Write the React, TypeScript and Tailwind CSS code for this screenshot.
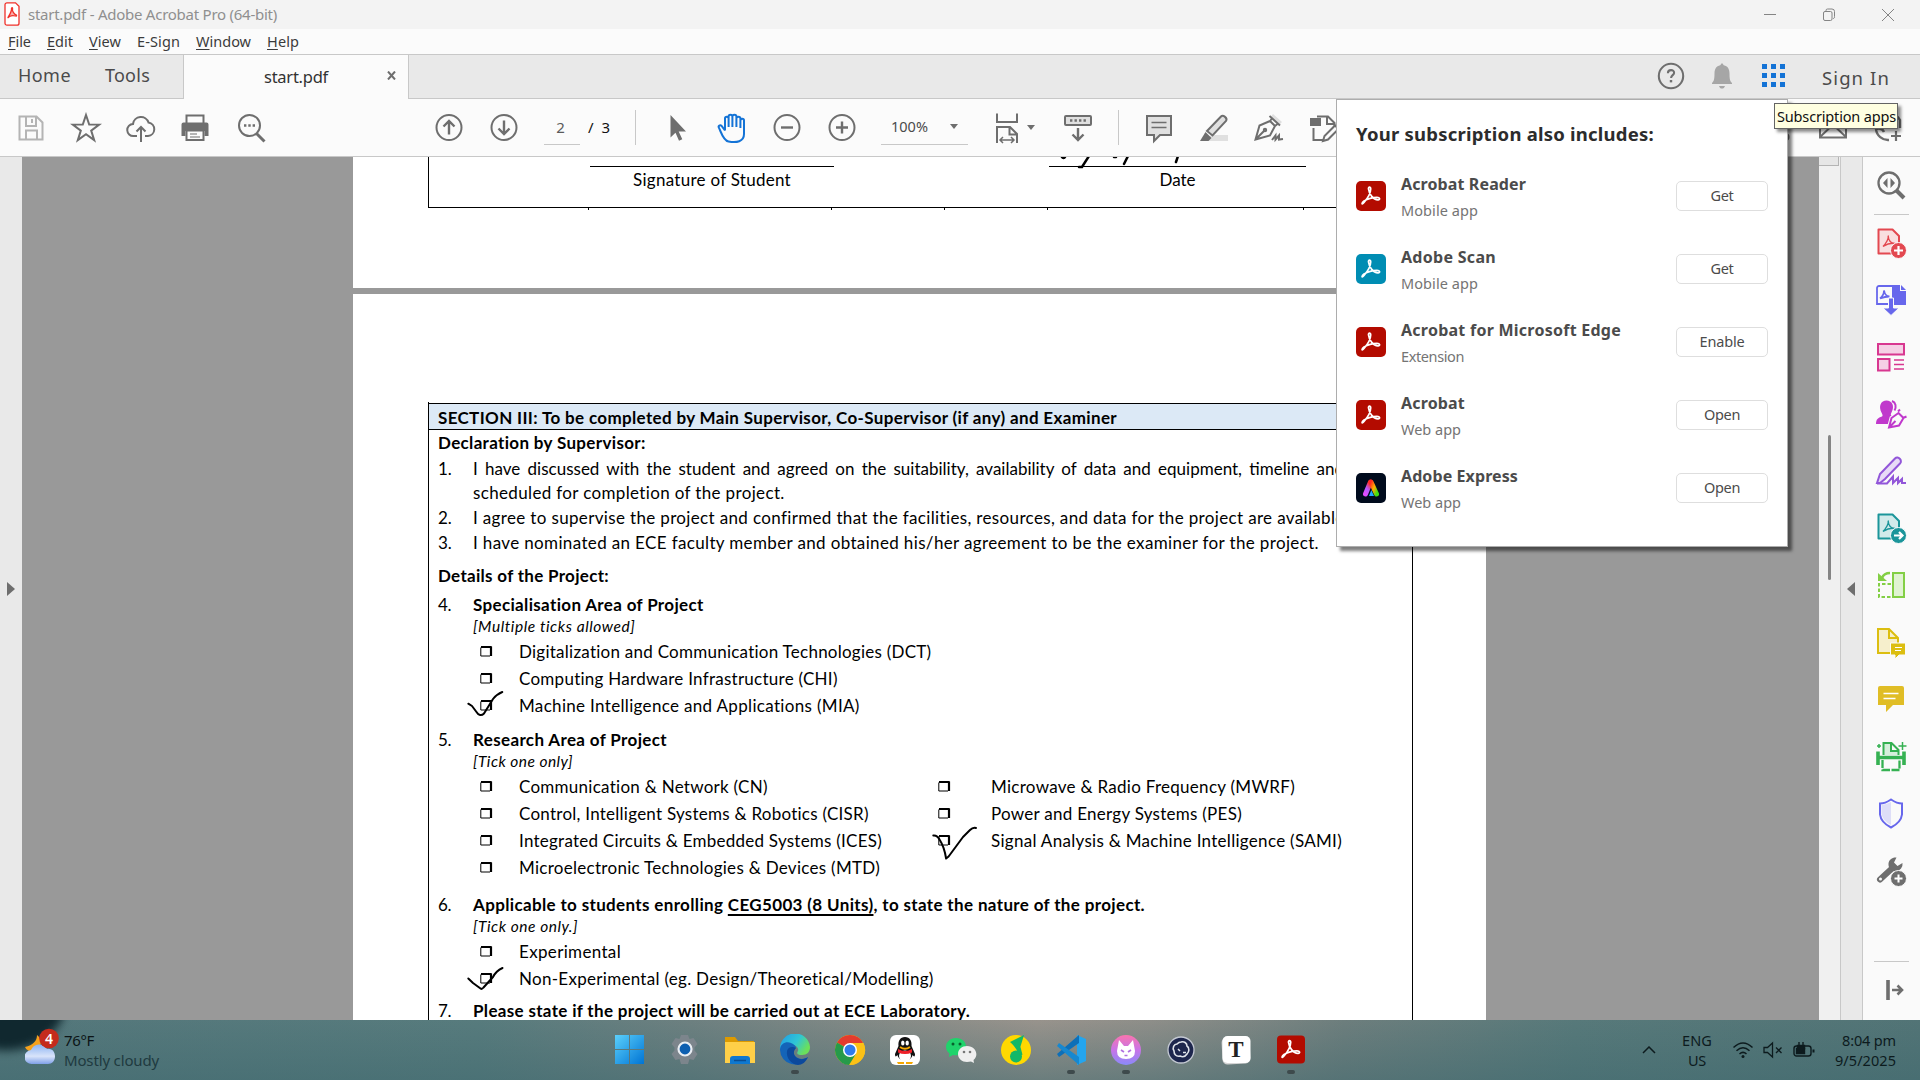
import React, { useLayoutEffect, useRef } from "react";
import clsx from "clsx";

type FitProps = { children: React.ReactNode; w: number; className?: string; by?: "letter" | "word" };

/* Single line of text whose spacing is tuned so that it occupies exactly `w` pixels. */
function Fit({ children, w, className, by = "letter" }: FitProps) {
  const ref = useRef<HTMLSpanElement>(null);
  useLayoutEffect(() => {
    const el = ref.current;
    if (!el) return;
    el.style.letterSpacing = "0px";
    el.style.wordSpacing = "0px";
    const text = el.textContent || "";
    const natural = el.getBoundingClientRect().width;
    if (by === "word") {
      el.style.wordSpacing = (w - natural) / Math.max(1, text.split(" ").length - 1) + "px";
    } else {
      el.style.letterSpacing = (w - natural) / Math.max(1, text.length) + "px";
    }
  }, [w, by, children]);
  return (
    <span ref={ref} className={clsx("inline-block w-max shrink-0 whitespace-pre", className)}>
      {children}
    </span>
  );
}

type IconProps = { children: React.ReactNode; className?: string; size?: number; color?: string; sw?: number };
function Icon({ children, className, size = 32, color = "#6e6e6e", sw = 2 }: IconProps) {
  return (
    <svg
      width={size}
      height={size}
      viewBox="0 0 32 32"
      fill="none"
      stroke={color}
      strokeWidth={sw}
      className={clsx("shrink-0", className)}
    >
      {children}
    </svg>
  );
}

/* ---------- window chrome ---------- */

function TitleBar() {
  return (
    <div className="flex h-[29px] items-center bg-[#f3f3f3] pl-1">
      <svg width="16" height="24" viewBox="0 0 16 24" fill="none" stroke="#f0322b" strokeWidth="1.3" className="-mt-px">
        <path d="M3 .8h8.500l3.500 3.400v17a2 2 0 0 1-2 2H3a2 2 0 0 1-2-2V2.800a2 2 0 0 1 2-2z" fill="#fff" />
        <path d="M4 15.500c1-2 4-6 3.500-9 0-1.200 1.300-1.200 1 .3-.5 2.700 2 5.700 3.500 6 1 .3.500 1.500-.5 1.200-2-.6-4-.6-6 .5-1 .8-1.500 1.500-1.500 1z" fill="#f0322b" fillOpacity=".4" />
      </svg>
      <Fit w={249} className="ml-[8px] text-[15px] text-[#8f8f8f]">start.pdf - Adobe Acrobat Pro (64-bit)</Fit>
      <div className="ml-auto mr-[25px] flex items-center gap-[45px]">
        <svg width="14" height="14" viewBox="0 0 14 14" stroke="#848484"><path d="M1 6.500h12" /></svg>
        <svg width="14" height="14" viewBox="0 0 14 14" fill="none" stroke="#848484">
          <rect x="1.500" y="3.500" width="8.500" height="9" rx="1.500" />
          <path d="M4 3V2.500a1.500 1.500 0 0 1 1.500-1.500H10a2.500 2.500 0 0 1 2.500 2.500v5A1.500 1.500 0 0 1 11 10.500" />
        </svg>
        <svg width="14" height="14" viewBox="0 0 14 14" stroke="#848484"><path d="M1 1l12 12M13 1L1 13" /></svg>
      </div>
    </div>
  );
}

const menus = [
  { k: "F", rest: "ile", w: 23 },
  { k: "E", rest: "dit", w: 26 },
  { k: "V", rest: "iew", w: 32 },
  { k: "", rest: "E-Sign", w: 43 },
  { k: "W", rest: "indow", w: 55 },
  { k: "H", rest: "elp", w: 32 },
];

function MenuBar() {
  return (
    <div className="flex h-[26px] items-center gap-4 border-b border-[#c8c8c8] bg-[#fbfbfb] pl-2 text-[14.5px] text-[#3b3b3b]">
      {menus.map((m) => (
        <Fit key={m.rest} w={m.w}>
          {m.k && <span className="underline decoration-1 underline-offset-2">{m.k}</span>}
          {m.rest}
        </Fit>
      ))}
    </div>
  );
}

function TabBar() {
  return (
    <div className="flex h-[44px] items-stretch bg-[#e9e9e9]">
      <div className="flex w-[183px] items-center border-b border-[#c8c8c8] pb-[2px] pl-[18px] text-[18px] text-[#4b4b4b]">
        <Fit w={53}>Home</Fit>
        <Fit w={45} className="ml-[34px]">Tools</Fit>
      </div>
      <div className="flex w-[226px] items-center border-x border-[#c8c8c8] bg-[#fbfbfb] pl-[80px] text-[#323232]">
        <Fit w={64} className="text-[16.5px]">start.pdf</Fit>
        <svg width="9" height="9" viewBox="0 0 9 9" stroke="#6e6e6e" strokeWidth="2" className="-mt-1 ml-[59px]"><path d="M1 .5l7 8M8 .5l-7 8" /></svg>
      </div>
      <div className="flex flex-1 items-center border-b border-[#c8c8c8] pb-[2px] pr-[30px]">
        <Icon className="ml-auto" size={30} sw={2.200}>
          <circle cx="16" cy="16" r="13" />
          <path d="M12.700 13c0-4.500 6.800-4.200 6.600-.3-.1 2.300-3.200 2.500-3.200 5.300" />
          <path d="M16 20.300v2.500" strokeWidth="2.600" />
        </Icon>
        <svg width="22" height="26" viewBox="0 0 22 26" fill="#a6a6a6" className="ml-[25px]">
          <path d="M11 0l1.800 2.300c4 .8 5.700 4 5.700 8 0 6 .6 8 2.500 9.700v1H1v-1c1.900-1.700 2.500-3.700 2.500-9.700 0-4 1.700-7.200 5.700-8zM8 23h6c-.5 1.700-1.600 2.600-3 2.600S8.500 24.700 8 23z" />
        </svg>
        <div className="ml-[29px] grid grid-cols-3 gap-x-[4px] gap-y-[4px]">
          {Array.from({ length: 9 }, (_, i) => (
            <div key={i} className="h-[5px] w-[5px] bg-[#1473d6]" />
          ))}
        </div>
        <Fit w={68} className="ml-[37px] mt-1 text-[18.500px] text-[#4b4b4b]">Sign In</Fit>
      </div>
    </div>
  );
}

function Caret({ className }: { className?: string }) {
  return <svg width="8" height="6" viewBox="0 0 8 6" fill="#6e6e6e" className={clsx("shrink-0", className)}><path d="M0 0h8L4 5z" /></svg>;
}

function Toolbar() {
  return (
    <div className="flex h-[58px] items-center border-b border-[#c8c8c8] bg-[#fbfbfb] pl-[15px]">
      <Icon color="#b4b4b4">
        <path d="M4.500 4.500h17l6 6v17h-23z" />
        <path d="M11 5v9h10V5M17 7v4M11 27v-8.500h11V27" />
      </Icon>
      <Icon className="ml-[23px]">
        <path d="M16 3l3.200 9.500 10 .1-8 6 3 9.500-8.200-5.800-8.200 5.800 3-9.500-8-6 10-.1z" />
      </Icon>
      <Icon className="ml-[23px]">
        <path d="M12 24H8.500a6 6 0 0 1-.5-12 8 8 0 0 1 15.500-1.500A6.800 6.800 0 0 1 23 24h-3" />
        <path d="M16 30V15M11.500 19.500L16 15l4.500 4.500" />
      </Icon>
      <Icon className="ml-[22px]">
        <path d="M7.500 11V3.500h17V11" />
        <path d="M2.500 12.500a2 2 0 0 1 2-2h23a2 2 0 0 1 2 2V24h-4v-5h-19v5h-4z" fill="#6e6e6e" stroke="none" />
        <rect x="7.500" y="18.500" width="17" height="9.500" fill="#fbfbfb" />
        <path d="M11 22h7M11 25h10" strokeWidth="1.200" />
      </Icon>
      <Icon className="ml-[24px]">
        <circle cx="14.500" cy="13.500" r="10.500" />
        <path d="M21.500 21.500l8 8" strokeWidth="3" />
        <path d="M9 13.500h2.400M13.300 13.500h2.400M17.600 13.500H20" strokeWidth="2.400" />
      </Icon>
      <Icon className="ml-[166px]">
        <circle cx="16" cy="15.500" r="12.500" />
        <path d="M16 22.500V9M10.500 14.500L16 9l5.500 5.500" strokeWidth="2.400" />
      </Icon>
      <Icon className="ml-[23px]">
        <circle cx="16" cy="15.500" r="12.500" />
        <path d="M16 8.500V22M10.500 16.500L16 22l5.500-5.500" strokeWidth="2.400" />
      </Icon>
      <div className="ml-[24px] flex h-[35px] w-[36px] items-center justify-center border-b border-[#c8c8c8] pr-[3px] text-[15px] text-[#5a5a5a]">2</div>
      <Fit w={22} className="ml-[8px] text-[15px] text-[#111]">/  3</Fit>
      <div className="ml-[25px] h-[35px] w-px shrink-0 bg-[#c8c8c8]" />
      <Icon className="ml-[25px]">
        <path d="M9.500 3v22.500l5-4.800 3.500 8 3.300-1.500-3.600-7.700H25z" fill="#6e6e6e" stroke="none" />
      </Icon>
      <Icon className="ml-[23px]" color="#1473d6">
        <path d="M9 18.500l-3.200-4.300c-1.700-2-4-.3-2.800 1.700 2.200 4.600 4.300 12.600 9.500 13.600 8 1.400 15.500.3 15.500-7.500V8.500c0-2.300-3.500-2.300-3.500 0M9 18.500V6.500c0-2.300 3.600-2.300 3.600 0V15 4.500c0-2.300 3.800-2.300 3.800 0V15 4.500c0-2.300 4-2.300 4 0V15M20.400 6.500c0-2.300 4-2.300 4 0V16" />
      </Icon>
      <Icon className="ml-[23px]"><circle cx="16" cy="15.500" r="12.500" /><path d="M10 15.500h12" strokeWidth="2.400" /></Icon>
      <Icon className="ml-[23px]"><circle cx="16" cy="15.500" r="12.500" /><path d="M10 15.500h12M16 9.500v12" strokeWidth="2.400" /></Icon>
      <div className="ml-[23px] flex h-[35px] w-[87px] shrink-0 items-center border-b border-[#c8c8c8] pl-[10px] text-[14.500px] text-[#4b4b4b]">
        <Fit w={37}>100%</Fit>
        <Caret className="ml-[22px]" />
      </div>
      <Icon className="ml-[23px]">
        <path d="M6 1.500V10h20V1.500M6 31V15h13l7 7v9M18.500 15v7.500H26" />
        <path d="M9.500 28h13M12 25l-3 3 3 3M20 25l3 3-3 3" strokeWidth="1.500" />
      </Icon>
      <Caret className="ml-[4px]" />
      <Icon className="ml-[27px]">
        <rect x="3" y="4" width="26" height="9" rx="1" fill="#e0e0e0" />
        <path d="M8 8.500h2.400M12.500 8.500h2.400M17 8.500h2.400M21.500 8.500h2.400" strokeWidth="2.400" />
        <path d="M16 16v12M10.500 22.500L16 28l5.500-5.500" strokeWidth="2.400" />
      </Icon>
      <div className="ml-[24px] h-[35px] w-px shrink-0 bg-[#c8c8c8]" />
      <Icon className="ml-[24px]">
        <path d="M4 4h24v19H17l-6 6v-6H4z" fill="#e0e0e0" />
        <path d="M8.500 10.500h15M8.500 15.500h15" strokeWidth="1.400" />
      </Icon>
      <Icon className="ml-[23px]">
        <path d="M13 23h17v6H8z" fill="#e0e0e0" stroke="none" />
        <path d="M9 19L23 4.500c2-2 7 1.500 5 4.500L14.500 23.500z" fill="#e0e0e0" />
        <path d="M2 29l5.500-9 6 6-3 3z" fill="#6e6e6e" stroke="none" />
      </Icon>
      <Icon className="ml-[23px]">
        <path d="M17 6l3-4 9 8-3 3z" fill="#e0e0e0" stroke="none" />
        <path d="M2.500 27.500l4-14L17 9l5 5-5 9.500zM2.500 27.500L11 19M16.500 4L27 13.500M19 6.500l-2 2.500M22 14l2.500-2" />
        <circle cx="12" cy="18" r="1.200" />
        <path d="M19 28l3.500-4.500v4l3.500-4v4l4-.5" />
      </Icon>
      <Icon className="ml-[23px]">
        <path d="M9 4.500h11l6.500 6.500v3M19 4.500V12h7M5.500 16v12H15" />
        <rect x="2" y="6" width="11" height="8" fill="#6e6e6e" stroke="none" />
        <path d="M15 29l1.500-5L27 13.500l3.500 3.500L20 27.500z" />
      </Icon>
      <Icon className="ml-[422px]"><circle cx="23.500" cy="25" r="4" fill="#6e6e6e" stroke="none" /></Icon>
      <Icon className="ml-[23px]">
        <path d="M3 6h26v19.500H3zM3 25l9.500-9h7l9.500 9" />
      </Icon>
      <Icon className="ml-[24px]">
        <path d="M16 28A12 12 0 0 1 3 17q6-2 8 3M27 16V8A12 12 0 0 0 8 6" strokeWidth="2.400" />
        <path d="M23 19v10M18 24h10" strokeWidth="2.200" />
      </Icon>
    </div>
  );
}

/* ---------- document ---------- */

function CheckBox() {
  return (
    <svg width="13" height="12" viewBox="0 0 13 12" fill="none" stroke="#000" className="shrink-0">
      <path d="M.8 2.500V11H10" strokeWidth="1" />
      <path d="M1 2h10.500M11 1.500v9.500" strokeWidth="2.200" />
    </svg>
  );
}

function Heading({ n, w, children, className }: { n: string; w: number; children: React.ReactNode; className?: string }) {
  return (
    <div className={clsx("flex h-[25px] items-center", className)}>
      <Fit w={13} className="mr-[22px]">{n}</Fit>
      <Fit w={w} className="font-bold">{children}</Fit>
    </div>
  );
}

function Note({ w, children }: { w: number; children: React.ReactNode }) {
  return <div className="flex h-[19px] items-center pl-[35px] text-[15.500px] italic"><Fit w={w}>{children}</Fit></div>;
}

function Option({ w, children, ink }: { w: number; children: React.ReactNode; ink?: React.ReactNode }) {
  return (
    <div className="relative flex h-[27px] items-center">
      <CheckBox />
      <Fit w={w} className="ml-[26px]">{children}</Fit>
      {ink}
    </div>
  );
}

function Ink({ d, className }: { d: string; className: string }) {
  return (
    <svg width="50" height="40" viewBox="0 0 50 40" fill="none" stroke="#000" strokeWidth="2" strokeLinecap="round" strokeLinejoin="round" className={clsx("pointer-events-none absolute", className)}>
      <path d={d} />
    </svg>
  );
}

function Clause({ n, w, by, children }: { n?: string; w: number; by?: "letter" | "word"; children: React.ReactNode }) {
  return (
    <div className="flex h-[24.700px] items-center">
      <span className="w-[35px] shrink-0">{n}</span>
      <Fit w={w} by={by}>{children}</Fit>
    </div>
  );
}

function FirstPage() {
  return (
    <div className="h-[131px] shrink-0 bg-white pl-[75px]">
      <div className="flex h-[51px] w-[985px] border-b border-l border-black pl-[161px] pt-[9px]">
        <div className="flex w-[244px] flex-col items-center border-t-[1.500px] border-black pt-[2px]">
          <Fit w={158} className="leading-[22px]">Signature of Student</Fit>
        </div>
        <div className="relative ml-[215px] flex w-[257px] flex-col items-center border-t-[1.500px] border-black pt-[2px]">
          <Fit w={36} className="leading-[22px]">Date</Fit>
          <svg width="140" height="14" viewBox="0 0 140 14" fill="none" stroke="#000" strokeWidth="2.500" strokeLinecap="round" className="absolute left-2 top-[-10px]">
            <path d="M5 0q2 2 3 0M32 -1l-7 11h-3M57 0l2 0M71 -1l-4 8M121 -1l-2 6" />
          </svg>
        </div>
      </div>
      <div className="flex h-[2px] pl-[160px]">
        <div className="w-px bg-black" />
        <div className="ml-[242px] w-px bg-black" />
        <div className="ml-[112px] w-px bg-black" />
        <div className="ml-[102px] w-px bg-black" />
        <div className="ml-[255px] w-px bg-black" />
      </div>
    </div>
  );
}

function SecondPage() {
  return (
    <div className="flex-1 bg-white pl-[75px] pt-[108px]">
      <div className="h-[700px] w-[985px] border-x border-black pt-px">
        <div className="flex h-[27px] items-center border-y border-black bg-[#dce9f6] pl-[9px] pt-[3px] font-bold">
          <Fit w={679}>SECTION III: To be completed by Main Supervisor, Co-Supervisor (if any) and Examiner</Fit>
        </div>
        <div className="flex flex-col pl-[9px]">
          <div className="flex h-[26px] items-center font-bold"><Fit w={208}>Declaration by Supervisor:</Fit></div>
          <Clause n="1." w={871} by="word">I have discussed with the student and agreed on the suitability, availability of data and equipment, timeline and</Clause>
          <Clause w={312}>scheduled for completion of the project.</Clause>
          <Clause n="2." w={876}>I agree to supervise the project and confirmed that the facilities, resources, and data for the project are available.</Clause>
          <Clause n="3." w={846}>I have nominated an ECE faculty member and obtained his/her agreement to be the examiner for the project.</Clause>
          <div className="mt-[8.500px] flex h-[25px] items-center font-bold"><Fit w={171}>Details of the Project:</Fit></div>
          <Heading n="4." w={231} className="mt-[3.500px]">Specialisation Area of Project</Heading>
          <Note w={162}>[Multiple ticks allowed]</Note>
          <div className="mt-[2px] flex flex-col pl-[42px]">
            <Option w={413}>Digitalization and Communication Technologies (DCT)</Option>
            <Option w={319}>Computing Hardware Infrastructure (CHI)</Option>
            <Option w={341} ink={<Ink className="-left-[14px] -top-[2px]" d="M2.300 13.700L6 16l4.500 6c2 3.500 5 4 7.500 1.500L27 9q4-5 9.300-7" />}>Machine Intelligence and Applications (MIA)</Option>
          </div>
          <Heading n="5." w={194} className="mt-[8px]">Research Area of Project</Heading>
          <Note w={100}>[Tick one only]</Note>
          <div className="mt-[2px] flex pl-[42px]">
            <div className="flex w-[458px] flex-col">
              <Option w={249}>Communication &amp; Network (CN)</Option>
              <Option w={350}>Control, Intelligent Systems &amp; Robotics (CISR)</Option>
              <Option w={363}>Integrated Circuits &amp; Embedded Systems (ICES)</Option>
              <Option w={361}>Microelectronic Technologies &amp; Devices (MTD)</Option>
            </div>
            <div className="flex flex-col">
              {[
                { t: "Microwave & Radio Frequency (MWRF)", w: 304 },
                { t: "Power and Energy Systems (PES)", w: 251 },
                { t: "Signal Analysis & Machine Intelligence (SAMI)", w: 351, tick: true },
              ].map((o) => (
                <div key={o.t} className="relative flex h-[27px] items-center">
                  <CheckBox />
                  <Fit w={o.w} className="ml-[40px]">{o.t}</Fit>
                  {o.tick && <Ink className="-left-[8px] -top-[2px]" d="M3.300 10.500q4-.5 6.500 4.500 4.500 7 6.300 18.500l2.500-2L33 12l7-7q3-3 6-2" />}
                </div>
              ))}
            </div>
          </div>
          <Heading n="6." w={672} className="mt-[11px]">
            Applicable to students enrolling <span className="underline decoration-[1.500px] underline-offset-[3px]">CEG5003 (8 Units)</span>, to state the nature of the project.
          </Heading>
          <Note w={105}>[Tick one only.]</Note>
          <div className="mt-[2px] flex flex-col pl-[42px]">
            <Option w={102}>Experimental</Option>
            <Option w={415} ink={<Ink className="-left-[14px] -top-[2px]" d="M2.300 15.500L7 20l7.500 5.500q1.500 1 3-1L27 14q3-6 9.500-9" />}>Non-Experimental (eg. Design/Theoretical/Modelling)</Option>
          </div>
          <Heading n="7." w={497} className="mt-[6px]">Please state if the project will be carried out at ECE Laboratory.</Heading>
        </div>
      </div>
    </div>
  );
}

/* ---------- tool rail ---------- */

function PdfSheet({ fill }: { fill: string }) {
  return (
    <>
      <path d="M3.500 2.500h14l6.500 6.500v17.500h-20.500z" fill={fill} strokeLinejoin="round" />
      <path d="M8 19.500c3-3 6-8 5.200-11M13.200 9c0 4 3 8 6.800 7.500-4-.8-8 .5-12 3" strokeWidth="1.400" />
    </>
  );
}

const railIcons: React.ReactNode[] = [
  <Icon key="create" color="#e34850">
    <PdfSheet fill="#f9dfe0" />
    <circle cx="23.500" cy="23.500" r="8" fill="#e34850" stroke="#fafafa" strokeWidth="1" />
    <path d="M23.500 19v9M19 23.500h9" stroke="#fff" strokeWidth="2.200" />
  </Icon>,
  <Icon key="export" color="#6767ec">
    <path d="M17 1h8v6h6v14H17z" fill="#6767ec" stroke="none" /><path d="M26 1l5 5h-5z" fill="#6767ec" stroke="none" />
    <path d="M17 2H4a2 2 0 0 0-2 2v16h14M5 14.500c2.500-2 4-5 4-8 .5 3.500 3 6 5.500 6-4 0-7 1-9.500 2" strokeWidth="1.800" />
    <path d="M13.500 14h5v10h5.500l-8 7.500L8 24h5.500z" fill="#6767ec" stroke="#fafafa" strokeWidth="1" />
  </Icon>,
  <Icon key="organize" color="#d83790">
    <rect x="3" y="3" width="26" height="10.500" fill="#f5d0e5" />
    <rect x="3" y="18" width="11.500" height="11.500" fill="#f5d0e5" />
    <path d="M19 19h10M19 23.500h10M19 28h10" strokeWidth="1.400" />
  </Icon>,
  <Icon key="request" color="#c038cc">
    <path d="M1 26c0-5 2-6 6-7.500 1-.5.500-2-.3-3.500C3 8 6 2.500 11.500 2.500S20 8 16.500 14.500c-.8 1.500-1 2.500 0 3L14 26z" fill="#c038cc" stroke="none" />
    <path d="M17 3c4 1.500 4.500 6 2.500 9.500" />
    <path d="M14 29.500l2.500-9.500 7-5 5 5-4.500 7.500z" fill="#fafafa" stroke="#fafafa" strokeWidth="4" />
    <path d="M14 29.500l2.500-9.500 7-5 5 5-4.500 7.500zM14.500 29l6-6M23 13.500l2-2M28 20l3.500-1.500" />
  </Icon>,
  <Icon key="sign" color="#9256d9">
    <path d="M2 28l3-9L20 3.500c3-3 8 2 5 5L10 24l-5 4z" fill="#e8dbf7" />
    <path d="M2 28.500h10l6-7v6.500l5-5v5l4-4v4h4" />
  </Icon>,
  <Icon key="send" color="#1b959a">
    <PdfSheet fill="#d1eaea" />
    <circle cx="23.500" cy="23.500" r="8" fill="#1b959a" stroke="#fafafa" strokeWidth="1" />
    <path d="M19 23.500h8M24 20l3.500 3.500L24 27" stroke="#fff" strokeWidth="2.200" />
  </Icon>,
  <Icon key="compare" color="#83cf45">
    <rect x="18" y="4" width="11" height="24" fill="#e0f3d2" />
    <path d="M16 15H4v13h12" strokeDasharray="3.500 2" />
    <path d="M15 4Q9 4 7 9" strokeWidth="2.600" /><path d="M3 4v8h9z" fill="#83cf45" stroke="none" />
  </Icon>,
  <Icon key="review" color="#dcbe10">
    <path d="M3 3h11l9 9v15H3z" fill="#f6efcc" /><path d="M14 3v9h9" />
    <path d="M15.500 17h15v12H24l-4 4v-4h-4.500z" fill="#dcbe10" stroke="#fafafa" strokeWidth="1" />
    <path d="M20 21.500h7M20 24.500h6" stroke="#fff" strokeWidth="1.200" />
  </Icon>,
  <Icon key="comment" color="#e0bd25">
    <path d="M3 5a2 2 0 0 1 2-2h22a2 2 0 0 1 2 2v17H18l-7 7v-7H3z" fill="#e0bd25" stroke="none" />
    <path d="M8.500 10.500h15M8.500 15.500h12" stroke="#fff" strokeWidth="1.700" />
  </Icon>,
  <Icon key="scan" color="#35b152">
    <path d="M8.500 15V3h8l7 7v5M16 3v8h7" fill="#d5efdb" />
    <path d="M3 11.500V25M29 11.500V25M2 17.500h28" strokeWidth="3.600" />
    <path d="M7.500 20v10h17V20" strokeDasharray="8 1.500" strokeWidth="2.300" />
    <path d="M4 4v4M2 6h4M27.500 2v8M23.500 6h8" strokeWidth="1.500" />
  </Icon>,
  <Icon key="protect" color="#6767ec">
    <path d="M16 2.500q6 4 11 4v11q-1 8-11 13Q6 25.500 5 17.500v-11q5 0 11-4z" />
    <path d="M16 5q-4.500 2.500-9.500 3v9q1 6.500 9.500 11z" fill="#dedef8" stroke="none" />
  </Icon>,
  <Icon key="more">
    <path d="M5 24.500L18 12.500" strokeWidth="6" strokeLinecap="round" />
    <path d="M21.500 2.500l-2.500 5 3.500 3.500 5-3a7.500 7.500 0 0 1-6.500 8.500c-4.500.5-8-3.500-7.500-8 .5-4 4-6.500 8-6z" fill="#6e6e6e" stroke="none" />
    <circle cx="5.500" cy="24" r="1.500" fill="#fafafa" stroke="none" />
    <circle cx="23.500" cy="23.500" r="8" fill="#6e6e6e" stroke="#fafafa" strokeWidth="1" />
    <path d="M23.500 19.500v8M19.500 23.500h8" stroke="#fff" strokeWidth="2" />
  </Icon>,
];

function ToolRail() {
  return (
    <div className="flex w-[58px] shrink-0 flex-col items-center border-l border-[#c8c8c8] bg-[#fafafa] pr-px">
      <div className="flex h-[57px] items-center pb-px">
        <Icon sw={2.300}>
          <circle cx="14" cy="14" r="10.500" />
          <path d="M21.500 21.500L29 29" strokeWidth="4" />
          <path d="M12.500 9v10L8 14zM15.500 9v10l4.500-5z" fill="#6e6e6e" stroke="none" />
        </Icon>
      </div>
      <div className="h-px w-[35px] bg-[#c8c8c8]" />
      {railIcons.map((icon, i) => (
        <div key={i} className="flex h-[57.100px] shrink-0 items-center pb-[2px]">{icon}</div>
      ))}
      <div className="mt-[61px] h-px w-[35px] shrink-0 bg-[#c8c8c8]" />
      <Icon className="mt-[12px]" sw={2.600}>
        <path d="M13 6v20" strokeWidth="3.600" /><path d="M17 16h10M22.500 11.500L27 16l-4.500 4.500" />
      </Icon>
    </div>
  );
}

function Workspace() {
  return (
    <div className="flex h-[863px] overflow-hidden">
      <div className="flex w-[22px] shrink-0 items-center bg-[#e9e9e9] pl-[7px]">
        <svg width="8" height="14" viewBox="0 0 8 14" fill="#6e6e6e"><path d="M0 0l8 7-8 7z" /></svg>
      </div>
      <div className="flex w-[1797px] shrink-0 bg-[#999] pl-[331px]">
        <div className="flex h-[863px] w-[1133px] flex-col overflow-hidden font-[Lato,sans-serif] text-[17px] text-black">
          <FirstPage />
          <div className="h-[6px] shrink-0" />
          <SecondPage />
        </div>
      </div>
      <div className="flex w-[22px] shrink-0 flex-col border-r border-[#c8c8c8] bg-[#f0f0f0]">
        <div className="h-[9px] w-[20px] border-b border-r border-[#b4b4b4] bg-[#e6e6e6]" />
        <div className="ml-[9px] mt-[269px] h-[145px] w-[3px] rounded bg-[#858585]" />
      </div>
      <div className="flex w-[21px] shrink-0 items-center justify-center bg-[#e9e9e9]">
        <svg width="8" height="14" viewBox="0 0 8 14" fill="#6e6e6e" className="mr-px"><path d="M8 0L0 7l8 7z" /></svg>
      </div>
      <ToolRail />
    </div>
  );
}

/* ---------- subscription popup ---------- */

function AcrobatMark() {
  return (
    <g fill="none" stroke="#fff" strokeWidth="1.700" strokeLinecap="round" strokeLinejoin="round">
      <path d="M7 22.500c2.500-3 7.500-7.500 7.700-14.500 0-2.500-2.500-2.300-2.200 0 .5 5 5 11 9.500 10.800 2.500-.3 2-2.500-1-2.500-5 0-9.500 1.500-13 3.700-2.500 1.700-2.300 3.800-1 2.500z" />
    </g>
  );
}

function AppTile({ kind }: { kind: string }) {
  if (kind === "express") {
    return (
      <svg width="30" height="30" viewBox="0 0 30 30" className="shrink-0">
        <defs>
          <linearGradient id="exA" x1="0" y1="1" x2=".5" y2="0"><stop offset="0" stopColor="#e04cff" /><stop offset=".5" stopColor="#b25cff" /><stop offset="1" stopColor="#ff3030" /></linearGradient>
          <linearGradient id="exB" x1="0" y1="0" x2="1" y2="1"><stop offset="0" stopColor="#ff2a20" /><stop offset=".5" stopColor="#ffb000" /><stop offset="1" stopColor="#40e010" /></linearGradient>
        </defs>
        <rect width="30" height="30" rx="5" fill="#000b1d" />
        <path d="M9.500 21L14.500 9" stroke="url(#exA)" strokeWidth="5" strokeLinecap="round" />
        <path d="M15 9l5.500 12" stroke="url(#exB)" strokeWidth="5" strokeLinecap="round" />
        <path d="M13 23l2.300-6 2.700 6z" fill="#22a8ff" />
      </svg>
    );
  }
  return (
    <svg width="30" height="30" viewBox="0 0 30 30" className="shrink-0">
      <rect width="30" height="30" rx="5" fill={kind === "scan" ? "#008db3" : "#b30b00"} />
      <AcrobatMark />
    </svg>
  );
}

const apps = [
  { kind: "acrobat", name: "Acrobat Reader", nw: 125, sub: "Mobile app", sw: 77, action: "Get", aw: 23 },
  { kind: "scan", name: "Adobe Scan", nw: 95, sub: "Mobile app", sw: 77, action: "Get", aw: 23 },
  { kind: "acrobat", name: "Acrobat for Microsoft Edge", nw: 220, sub: "Extension", sw: 63, action: "Enable", aw: 45 },
  { kind: "acrobat", name: "Acrobat", nw: 64, sub: "Web app", sw: 60, action: "Open", aw: 36 },
  { kind: "express", name: "Adobe Express", nw: 117, sub: "Web app", sw: 60, action: "Open", aw: 36 },
];

function SubscriptionPopup() {
  return (
    <div className="absolute left-[1336px] top-[99px] flex h-[448px] w-[452px] flex-col border border-[#adadad] bg-white pl-[19px] pr-[19px] shadow-[4px_4px_3px_0px_rgba(0,0,0,0.5)]">
      <Fit w={298} className="mt-[22px] text-[18.500px] font-bold leading-6 text-[#2c2c2c]">Your subscription also includes:</Fit>
      <div className="mt-[22px] flex flex-col">
        {apps.map((a) => (
          <div key={a.name} className="flex h-[73px] items-start">
            <div className="mt-[13px]"><AppTile kind={a.kind} /></div>
            <div className="ml-[15px] flex flex-col items-start">
              <Fit w={a.nw} className="mt-[5px] text-[16px] font-bold leading-[22px] text-[#4b4b4b]">{a.name}</Fit>
              <Fit w={a.sw} className="mt-[4px] text-[14.500px] leading-[22px] text-[#747474]">{a.sub}</Fit>
            </div>
            <div className="ml-auto mt-[13px] flex h-[30px] w-[92px] items-center justify-center rounded-[5px] border border-[#dedede] text-[14.500px] text-[#4b4b4b]">
              <Fit w={a.aw}>{a.action}</Fit>
            </div>
          </div>
        ))}
      </div>
    </div>
  );
}

function Tooltip() {
  return (
    <div className="absolute left-[1774px] top-[103px] flex h-[26px] w-[124px] items-center border border-[#646464] bg-[#ffffe1] pl-[2px] pt-px text-[14.500px] text-[#111] shadow-[3px_3px_3px_rgba(0,0,0,0.45)]">
      <Fit w={119}>Subscription apps</Fit>
    </div>
  );
}

/* ---------- taskbar ---------- */

const taskIcons: { key: string; open?: boolean; art: React.ReactNode }[] = [
  {
    key: "start",
    art: (<><defs><linearGradient id="win" x1="0" y1="0" x2="1" y2="1"><stop offset="0" stopColor="#5bd0fb" /><stop offset="1" stopColor="#0074d4" /></linearGradient></defs>
      <path d="M1 1h14v14H1zM16 1h14v14H16zM1 16h14v14H1zM16 16h14v14H16z" fill="url(#win)" /></>),
  },
  {
    key: "settings",
    art: (<><path d="M12 1h7l1.500 4 4-1 4 6-3 3.500v3l3 3.500-4 6-4-1L19 30h-7l-1.500-5-4 1-4-6 3-3.500v-3L2.500 10l4-6 4 1z" fill="#7c858c" />
      <circle cx="16" cy="15" r="6.500" fill="#0d5fb0" stroke="#e8edf2" strokeWidth="2.200" /></>),
  },
  {
    key: "explorer",
    art: (<><path d="M1 3h10l3 4h16v8H1z" fill="#dd9a00" /><path d="M1 8h30v21H1z" fill="#ffcf48" /><path d="M6 30v-5q0-3 3-3h14q3 0 3 3v5z" fill="#0f78cf" /><path d="M10 26.500h12" stroke="#0a4d93" strokeWidth="1.500" /></>),
  },
  {
    key: "edge",
    open: true,
    art: (<><defs><linearGradient id="edge" x1="0" y1="0" x2="1" y2=".5"><stop offset="0" stopColor="#1f9be8" /><stop offset=".6" stopColor="#30c6d4" /><stop offset="1" stopColor="#6be05a" /></linearGradient></defs>
      <path d="M1 16a15 15 0 0 1 30-3c0 5-3 8-8 8-4 0-6-1-4-4 1-3-2-6-6-6-6 0-12 4-12 5z" fill="url(#edge)" />
      <path d="M1 16c0-7 7-9 11-7 3 1 5 3 5 5-3 2-3 7 0 9 4 3 9 2 12 0a15 15 0 0 1-28-7z" fill="#1464b8" />
      <path d="M8 17c-1 7 4 13 11 14 4 0 8-3 10-8-4 3-10 3-13-1-2-3-1-6 1-8-4-2-8-1-9 3z" fill="#0c499c" /></>),
  },
  {
    key: "chrome",
    art: (<><circle cx="16" cy="16" r="15" fill="#fbc116" /><path d="M16 16L3 8.500a15 15 0 0 1 26 0z" fill="#e33b2e" /><path d="M16 16L3 8.500a15 15 0 0 0 12 22.500l7-11z" fill="#269a4a" /><path d="M16 9h13.500a15 15 0 0 1-13.500 22l6-11z" fill="#fbc116" /><circle cx="16" cy="16" r="7" fill="#fff" /><circle cx="16" cy="16" r="5.500" fill="#2f7bec" /></>),
  },
  {
    key: "qq",
    art: (<><rect x="1" y="1" width="30" height="30" rx="6" fill="#fff" /><path d="M16 3c-5 0-7 4-6.500 9L6 20c0 3 1 3 2.500 1 1 7 14 7 15 0 1.500 2 2.500 2 2.500-1l-3.500-8C23 7 21 3 16 3z" fill="#111" /><ellipse cx="16" cy="22" rx="6" ry="5.500" fill="#fff" /><ellipse cx="13.800" cy="9" rx="1.700" ry="2.500" fill="#fff" /><ellipse cx="18.200" cy="9" rx="1.700" ry="2.500" fill="#fff" /><path d="M11 13q5 3.500 10 0" stroke="#f6a800" strokeWidth="2" fill="none" /><path d="M9 15q7 4 14 0v3.500q-7 3-14 0z" fill="#ef2029" /><path d="M8 28h7v2H9zM17 28h7l-1 2h-6z" fill="#f6a800" /></>),
  },
  {
    key: "wechat",
    art: (<><path d="M11 4C5 4 1 8 1 13c0 3 1.500 5 3.500 6.500L4 23l4-2c8 1.500 13-3 13-8.500C21 8 17 4 11 4z" fill="#1fd36b" /><circle cx="8" cy="10" r="1.500" fill="#07602c" /><circle cx="15" cy="10" r="1.500" fill="#07602c" /><path d="M22 12c-5 0-9 3.500-9 8s4 8 9 8l4-.5 3 1.500-.5-3c6-5 2-14-6.500-14z" fill="#efefef" /><circle cx="19" cy="18" r="1.300" fill="#777" /><circle cx="25" cy="18" r="1.300" fill="#777" /></>),
  },
  {
    key: "music",
    art: (<><circle cx="16" cy="16" r="15" fill="#ffd800" /><path d="M24 1L10 8q4 3 8.500 11" fill="#13b868" /><circle cx="16" cy="22.500" r="6" fill="#13b868" /><path d="M16 8q4 6 5 13" stroke="#13b868" strokeWidth="3" fill="none" /></>),
  },
  {
    key: "code",
    open: true,
    art: (<><path d="M22 1l9 4v22l-9 4z" fill="#24a5ee" /><path d="M24 1L2 20l2 3 20-14z" fill="#0d6fb8" /><path d="M24 31L2 12l2-3 20 14z" fill="#1788d0" /></>),
  },
  {
    key: "clash",
    open: true,
    art: (<><defs><linearGradient id="cat" x1="0" y1="0" x2="0" y2="1"><stop offset="0" stopColor="#f974ae" /><stop offset=".5" stopColor="#c874e8" /><stop offset="1" stopColor="#8a8af8" /></linearGradient></defs><circle cx="16" cy="16" r="15" fill="url(#cat)" /><path d="M9 6l5 6h4l5-6 2 11q0 8-9 8t-9-8z" fill="#fff" /><path d="M11 16l3 2M21 16l-3 2M14.500 21.500h3" stroke="#b070e0" strokeWidth="1.700" /></>),
  },
  {
    key: "agent",
    art: (<><circle cx="16" cy="16" r="13" fill="#1d264d" stroke="#c3c8d2" strokeWidth="1.300" /><path d="M16 8c3-1 6 1 6 4 3 2 2 6 0 8-2 3-5 3-7 2-4 1-6-2-6-5-2-3 0-7 3-7 1-1 2-2 4-2z" fill="none" stroke="#dfe3ea" strokeWidth="1.600" /><path d="M13 15l2 2M18 18.500h3" stroke="#dfe3ea" strokeWidth="1.500" /></>),
  },
  {
    key: "typora",
    art: (<><rect x="2" y="3" width="28" height="27" rx="5" fill="#d5d5d5" transform="rotate(-3 16 16)" /><rect x="2.500" y="2" width="28" height="27" rx="5" fill="#fff" /><text x="16" y="23" textAnchor="middle" fontFamily="Liberation Serif, serif" fontWeight="bold" fontSize="23" fill="#222">T</text></>),
  },
  {
    key: "acrobat",
    open: true,
    art: (<><rect x="2" y="1.500" width="28" height="28" rx="4" fill="#b30b00" /><g transform="translate(1 .5)"><AcrobatMark /></g></>),
  },
];

function Taskbar() {
  return (
    <div className="relative flex h-[60px] items-center overflow-hidden bg-[linear-gradient(180deg,rgba(70,105,110,0)_0%,rgba(62,104,110,0.5)_100%),linear-gradient(90deg,#54777b_0%,#577b7d_25%,#6d8080_36%,#98938c_54%,#8e8e89_60%,#6d7e7d_70%,#57797a_82%,#527476_100%)]">
      <div className="absolute -left-10 -top-12 h-[78px] w-[105px] -rotate-12 rounded-[50%] bg-[#10282f] blur-[5px]" />
      <svg width="34" height="40" viewBox="0 0 34 40" className="relative -mt-1 ml-[25px] shrink-0">
        <defs><linearGradient id="cloud" x1="0" y1="0" x2="0" y2="1"><stop offset="0" stopColor="#8db4f3" /><stop offset=".6" stopColor="#d9e4fa" /><stop offset="1" stopColor="#7fa0e8" /></linearGradient></defs>
        <path d="M12 7c0 6-4 10-12 12 2 5 9 6 13 2 4-4 4-10-1-14z" fill="#f6a21c" />
        <path d="M7 36a7 7 0 0 1-1-14 9 9 0 0 1 16-1c5-1 8 3 8 7.500S27 36 23 36z" fill="url(#cloud)" />
        <circle cx="24" cy="10.500" r="9.800" fill="#c42b1c" />
        <text x="24" y="15.500" textAnchor="middle" fontSize="14" fontWeight="600" fill="#fff" fontFamily="Noto Sans, sans-serif">4</text>
      </svg>
      <div className="relative ml-[5px] flex flex-col pb-px text-[15px] leading-[20px]">
        <Fit w={30} className="text-[#0c1416]">76°F</Fit>
        <Fit w={95} className="text-[#203a3f]">Mostly cloudy</Fit>
      </div>
      <div className="absolute left-[614px] top-0 flex h-[60px]">
        {taskIcons.map((t) => (
          <div key={t.key} className="flex w-[55.100px] flex-col items-start pt-[14px]">
            <svg width="32" height="32" viewBox="0 0 32 32">{t.art}</svg>
            {t.open && <div className="ml-[12px] mt-[4px] h-[4px] w-[8px] rounded-full bg-[#3e4a4c]" />}
          </div>
        ))}
      </div>
      <div className="ml-auto flex items-center pb-px pr-[24px] text-[14.500px] leading-[20px] text-[#0d1b1e]">
        <svg width="14" height="8" viewBox="0 0 14 8" fill="none" stroke="#0d1b1e" strokeWidth="1.500"><path d="M1 7l6-6 6 6" /></svg>
        <div className="ml-[26px] flex w-[30px] flex-col items-center"><Fit w={30}>ENG</Fit><Fit w={18}>US</Fit></div>
        <svg width="22" height="18" viewBox="0 0 22 18" fill="none" stroke="#0d1b1e" strokeWidth="1.500" className="ml-[20px]">
          <path d="M1.500 6.500q9.500-9 19 0M4.500 9.800q6.500-6 13 0M7.500 13q3.500-3.200 7 0" /><circle cx="11" cy="15.500" r="1.500" fill="#0d1b1e" stroke="none" />
        </svg>
        <svg width="20" height="18" viewBox="0 0 20 18" fill="none" stroke="#0d1b1e" strokeWidth="1.300" className="ml-[9px]">
          <path d="M1 6.500h3.500L9.500 2v14l-5-4.500H1zM13 6.500l5.500 5.500M18.500 6.500L13 12" />
        </svg>
        <svg width="22" height="18" viewBox="0 0 22 18" fill="none" stroke="#0d1b1e" strokeWidth="1.400" className="ml-[10px]">
          <rect x="1" y="5" width="17" height="10" rx="2.500" /><path d="M20.500 8.500v3" strokeWidth="2" /><path d="M3.500 7.500h8v5h-8z" fill="#0d1b1e" />
          <path d="M6 1v3M10 1v3M4.500 4.500h7V8L8 10.500 4.500 8z" fill="#0d1b1e" />
        </svg>
        <div className="ml-[19px] flex w-[62px] flex-col items-end"><Fit w={54}>8:04 pm</Fit><Fit w={61}>9/5/2025</Fit></div>
      </div>
    </div>
  );
}

export default function App() {
  return (
    <div className="relative h-[1080px] w-[1920px] overflow-hidden bg-[#fbfbfb] font-['Noto_Sans',sans-serif]">
      <TitleBar />
      <MenuBar />
      <TabBar />
      <Toolbar />
      <Workspace />
      <Taskbar />
      <SubscriptionPopup />
      <Tooltip />
    </div>
  );
}
